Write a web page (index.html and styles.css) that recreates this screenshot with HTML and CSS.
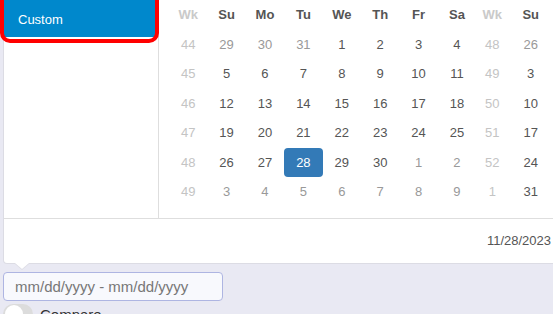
FILE: index.html
```html
<!DOCTYPE html>
<html>
<head>
<meta charset="utf-8">
<link rel="stylesheet" href="styles.css">
</head>
<body>
<div class="popup">
  <div class="main">
    <div class="sidebar">
      <div class="range active">Custom</div>
    </div>
    <div class="calendars">
      <div class="month">
        <div class="wk head">Wk</div><div class="head">Su</div><div class="head">Mo</div><div class="head">Tu</div><div class="head">We</div><div class="head">Th</div><div class="head">Fr</div><div class="head">Sa</div>
        <div class="wk">44</div><div class="off">29</div><div class="off">30</div><div class="off">31</div><div>1</div><div>2</div><div>3</div><div>4</div>
        <div class="wk">45</div><div>5</div><div>6</div><div>7</div><div>8</div><div>9</div><div>10</div><div>11</div>
        <div class="wk">46</div><div>12</div><div>13</div><div>14</div><div>15</div><div>16</div><div>17</div><div>18</div>
        <div class="wk">47</div><div>19</div><div>20</div><div>21</div><div>22</div><div>23</div><div>24</div><div>25</div>
        <div class="wk">48</div><div>26</div><div>27</div><div class="sel">28</div><div>29</div><div>30</div><div class="off">1</div><div class="off">2</div>
        <div class="wk">49</div><div class="off">3</div><div class="off">4</div><div class="off">5</div><div class="off">6</div><div class="off">7</div><div class="off">8</div><div class="off">9</div>
      </div>
      <div class="month second">
        <div class="wk head">Wk</div><div class="head">Su</div>
        <div class="wk">48</div><div class="off">26</div>
        <div class="wk">49</div><div>3</div>
        <div class="wk">50</div><div>10</div>
        <div class="wk">51</div><div>17</div>
        <div class="wk">52</div><div>24</div>
        <div class="wk">1</div><div>31</div>
      </div>
    </div>
  </div>
  <div class="footer">11/28/2023</div>
  <span class="caret"></span>
</div>
<div class="date-input">mm/dd/yyyy - mm/dd/yyyy</div>
<div class="compare">
  <span class="toggle"><span class="knob"></span></span>
  <span class="compare-label">Compare</span>
</div>
</body>
</html>
```

FILE: styles.css
```css
html, body {
  margin: 0;
  padding: 0;
}
body {
  background: #e9e9f3;
  font-family: "Liberation Sans", Arial, sans-serif;
  font-size: 13px;
  color: #555;
  overflow: hidden;
  width: 553px;
  height: 314px;
}
.popup {
  position: relative;
  margin-left: 3px;
  margin-top: -4px;
  width: 580px;
  background: #fff;
  border: 1px solid #dcdce4;
  border-top: none;
  border-radius: 0 0 4px 4px;
}
.main {
  display: flex;
  border-bottom: 1px solid #dedede;
  height: 222px;
}
.sidebar {
  width: 154px;
  flex: none;
  border-right: 1px solid #dedede;
}
.range {
  position: relative;
  height: 41px;
  width: 151px;
  box-sizing: border-box;
  padding: 16px 0 0 14px;
  color: #fff;
  font-size: 13px;
}
.range.active {
  background: #0088cc;
}
.range.active::after {
  content: "";
  position: absolute;
  left: -4px;
  right: -4px;
  top: -8px;
  bottom: -6px;
  border: 4px solid #ff0000;
  border-radius: 10px;
}
.calendars {
  display: flex;
  padding: 4px 0 0 10px;
}
.month {
  display: grid;
  grid-template-columns: repeat(8, 38.4px);
  grid-auto-rows: 29.5px;
  align-items: center;
  justify-items: center;
}
.month.second {
  grid-template-columns: repeat(2, 38.4px);
  margin-left: -3px;
}
.month > div {
  width: 39px;
  height: 29px;
  line-height: 29px;
  text-align: center;
  border-radius: 4px;
  color: #555;
}
.month > .off {
  color: #999;
}
.month > .wk {
  color: #c4c4c4;
}
.month > .head {
  font-weight: bold;
  color: #555;
}
.month > .wk.head {
  color: #cacaca;
}
.month > .sel {
  background: #337ab7;
  color: #fff;
}
.footer {
  height: 44px;
  line-height: 44px;
  text-align: right;
  padding-right: 33px;
  color: #555;
}
.caret {
  position: absolute;
  left: 11px;
  top: 100%;
  width: 0;
  height: 0;
  border-left: 7px solid transparent;
  border-right: 7px solid transparent;
  border-top: 6px solid #fff;
  filter: drop-shadow(0 1px 0 #dcdce4);
}
.date-input {
  margin: 8px 0 0 3px;
  width: 220px;
  height: 29px;
  box-sizing: border-box;
  border: 1px solid #aeb5e2;
  border-radius: 4px;
  background: #f8f9fd;
  color: #777;
  font-size: 15px;
  line-height: 27px;
  padding-left: 11px;
}
.compare {
  display: flex;
  align-items: flex-start;
  gap: 7px;
  margin: 3px 0 0 3px;
}
.toggle {
  display: block;
  width: 30px;
  height: 20px;
  border-radius: 10px;
  background: #dcdcdc;
  position: relative;
}
.knob {
  position: absolute;
  left: 2px;
  top: 1px;
  width: 18px;
  height: 18px;
  border-radius: 50%;
  background: #fff;
}
.compare-label {
  font-size: 15px;
  color: #333;
  line-height: 20px;
  padding-top: 1px;
}
```
